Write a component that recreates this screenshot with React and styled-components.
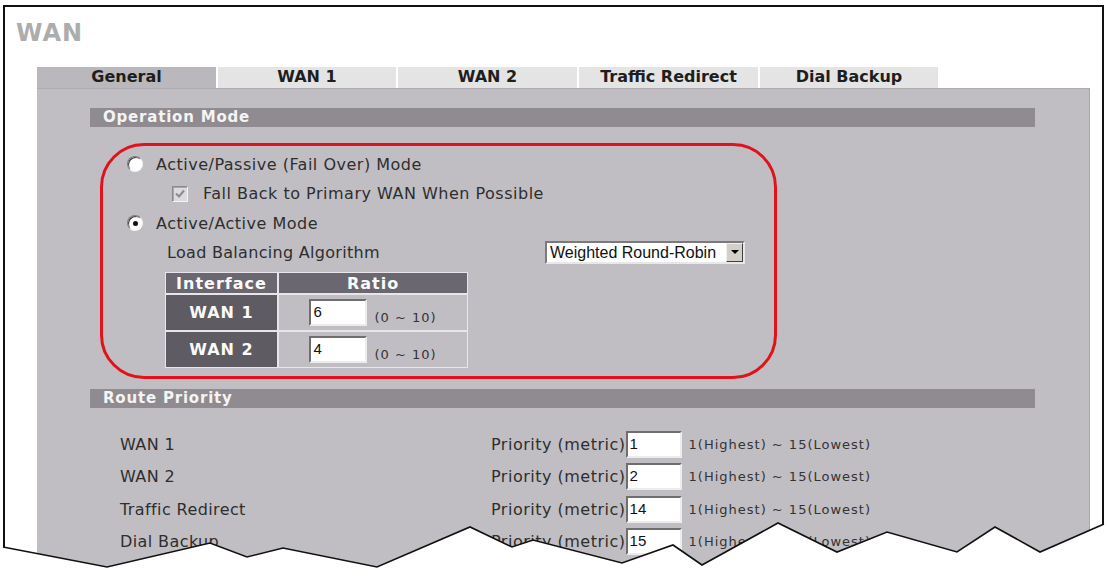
import React from 'react';
import styled, { createGlobalStyle } from 'styled-components';

const GlobalStyle = createGlobalStyle`
  html, body { margin: 0; padding: 0; background: #fff; }
  body { font-family: "DejaVu Sans", Verdana, sans-serif; color: #2e2e2e; }
`;

const Page = styled.div`
  position: relative;
  width: 1109px;
  height: 576px;
  overflow: hidden;
  background: #fff;
`;

const Frame = styled.div`
  box-sizing: border-box;
  margin: 5px 0 0 3px;
  width: 1101px;
  height: 620px;
  border: 2px solid #111;
  border-bottom: none;
`;

const Title = styled.h1`
  margin: 0;
  padding: 12px 0 0 11px;
  height: 48px;
  box-sizing: border-box;
  font-size: 24px;
  line-height: 28px;
  font-weight: bold;
  color: #adadad;
  letter-spacing: 1px;
`;

const TabBar = styled.div`
  display: flex;
  margin: 12px 0 0 32px;
  height: 21px;
`;

const Tab = styled.div`
  width: ${p => p.w}px;
  box-sizing: border-box;
  border-right: 2px solid #fff;
  background: ${p => (p.active ? '#bbb8bd' : '#e4e4e4')};
  font-weight: bold;
  font-size: 16px;
  line-height: 20px;
  text-align: center;
  color: #1e1e1e;
`;

const Panel = styled.div`
  box-sizing: border-box;
  margin-left: 32px;
  width: 1053px;
  height: 520px;
  background: #c1bec3;
  border-top: 1px solid #aeabb0;
  border-right: 1px solid #aaa8ac;
  padding-top: 19px;
`;

const SectionBar = styled.div`
  margin-left: 53px;
  width: 945px;
  height: 19px;
  background: #8f8b91;
  color: #f4f4f4;
  font-weight: bold;
  font-size: 15px;
  line-height: 19px;
  letter-spacing: 0.8px;
  padding-left: 13px;
  box-sizing: border-box;
  margin-top: ${p => p.mt || 0}px;
`;

const Callout = styled.div`
  box-sizing: border-box;
  margin: 16px 0 0 63px;
  width: 677px;
  height: 236px;
  border: 3px solid #e0121b;
  border-radius: 44px;
  padding: 3px 0 0 24px;
`;

const OptionRow = styled.div`
  display: flex;
  align-items: center;
  height: ${p => p.h || 30}px;
  padding-left: ${p => p.indent || 0}px;
  font-size: 16px;
  letter-spacing: 0.5px;
  white-space: nowrap;
`;

const Radio = styled.span`
  position: relative;
  width: 14px;
  height: 14px;
  flex: none;
  border-radius: 50%;
  background: #fff;
  border: 1px solid;
  border-color: #7c7c7c #f2f2f2 #f2f2f2 #7c7c7c;
  box-shadow: inset 1px 1px 0 #3c3c3c;
  margin-right: 13px;
  &::after {
    content: '';
    display: ${p => (p.checked ? 'block' : 'none')};
    position: absolute;
    left: 5px;
    top: 5px;
    width: 5px;
    height: 5px;
    border-radius: 50%;
    background: #111;
  }
`;

const CheckBox = styled.span`
  width: 14px;
  height: 14px;
  flex: none;
  background: #dcdadd;
  border: 1px solid;
  border-color: #8a8a8a #f4f4f4 #f4f4f4 #8a8a8a;
  box-shadow: inset 1px 1px 0 #a8a8a8;
  margin-right: 15px;
  display: flex;
  align-items: center;
  justify-content: center;
`;

const Spacer = styled.div`
  width: ${p => p.w}px;
  flex: none;
  letter-spacing: 0.3px;
`;

const Select = styled.div`
  display: flex;
  width: 200px;
  height: 23px;
  box-sizing: border-box;
  background: #fff;
  border: 2px solid;
  border-color: #7a7a7a #e8e8e8 #e8e8e8 #7a7a7a;
  font-family: "Liberation Sans", Arial, sans-serif;
  font-size: 16px;
  letter-spacing: 0;
  color: #111;
`;

const SelectText = styled.span`
  flex: 1;
  line-height: 19px;
  padding-left: 3px;
`;

const SelectArrow = styled.span`
  width: 17px;
  background: #d4d0c8;
  border: 1px solid;
  border-color: #f0f0f0 #404040 #404040 #f0f0f0;
  box-sizing: border-box;
  display: flex;
  align-items: center;
  justify-content: center;
  &::after {
    content: '';
    border-left: 4px solid transparent;
    border-right: 4px solid transparent;
    border-top: 4px solid #000;
  }
`;

const RatioTable = styled.div`
  display: grid;
  grid-template-columns: 111px 188px;
  grid-template-rows: 20px 35px 35px;
  gap: 2px;
  margin: 6px 0 0 38px;
  width: 303px;
  box-sizing: border-box;
  padding: 1px;
  background: #e8e6ea;
`;

const HeadCell = styled.div`
  background: ${p => (p.dark ? '#5f5b63' : '#6b6770')};
  color: #fafafa;
  font-weight: bold;
  font-size: 16px;
  letter-spacing: 1px;
  display: flex;
  align-items: center;
  justify-content: center;
`;

const RatioCell = styled.div`
  background: #c1bec3;
  display: flex;
  align-items: flex-end;
  justify-content: center;
  padding-bottom: 4px;
  box-sizing: border-box;
`;

const TextInput = styled.div`
  width: ${p => p.w}px;
  height: ${p => p.h}px;
  box-sizing: border-box;
  background: #fff;
  border: 2px solid;
  border-color: #6e6e6e #ececec #ececec #6e6e6e;
  font-family: "Liberation Sans", Arial, sans-serif;
  font-size: 15px;
  letter-spacing: 0;
  line-height: ${p => p.h - 6}px;
  padding-left: 2px;
  color: #111;
  flex: none;
`;

const Hint = styled.span`
  font-size: 13px;
  letter-spacing: 1px;
  color: #333;
  margin-left: 7px;
  margin-bottom: ${p => p.mb || 0}px;
  white-space: nowrap;
`;

const RouteList = styled.div`
  margin: 20px 0 0 83px;
`;

const RouteRow = styled.div`
  display: flex;
  align-items: center;
  height: 32.5px;
  font-size: 16px;
  white-space: nowrap;
`;

const RouteLabel = styled.span`
  width: 371px;
  flex: none;
  letter-spacing: 0.4px;
`;

const Metric = styled.span`
  letter-spacing: 0.5px;
`;

const TornEdge = styled.svg`
  position: absolute;
  left: 0;
  top: 0;
  pointer-events: none;
`;

const tabs = [
  { label: 'General', w: 181, active: true },
  { label: 'WAN 1', w: 180 },
  { label: 'WAN 2', w: 181 },
  { label: 'Traffic Redirect', w: 181 },
  { label: 'Dial Backup', w: 180 },
];

const routes = [
  { name: 'WAN 1', value: '1' },
  { name: 'WAN 2', value: '2' },
  { name: 'Traffic Redirect', value: '14' },
  { name: 'Dial Backup', value: '15' },
];

const tear = [
  [3, 547], [107, 567], [210, 543], [247, 557], [283, 548], [377, 567],
  [470, 527], [512, 547], [533, 540], [622, 563], [673, 545], [702, 565],
  [778, 523], [837, 552], [887, 532], [957, 552], [995, 527], [1040, 552], [1104, 524],
];

const tearLine = tear.map(p => p.join(',')).join(' ');
const tearFill = `0,547 ${tearLine} 1109,522 1109,576 0,576`;

const App = () => {
  return (
    <Page>
      <GlobalStyle />
      <Frame>
        <Title>WAN</Title>
        <TabBar>
          {tabs.map(t => (
            <Tab key={t.label} w={t.w} active={t.active}>{t.label}</Tab>
          ))}
        </TabBar>
        <Panel>
          <SectionBar>Operation Mode</SectionBar>
          <Callout>
            <OptionRow h={30}>
              <Radio />
              Active/Passive (Fail Over) Mode
            </OptionRow>
            <OptionRow h={29} indent={45}>
              <CheckBox>
                <svg width="10" height="10" viewBox="0 0 10 10">
                  <polyline points="1,4.5 4,7.5 9,1.5" fill="none" stroke="#8c8c8c" strokeWidth="2" />
                </svg>
              </CheckBox>
              Fall Back to Primary WAN When Possible
            </OptionRow>
            <OptionRow h={30}>
              <Radio checked />
              Active/Active Mode
            </OptionRow>
            <OptionRow h={28} indent={40}>
              <Spacer w={378}>Load Balancing Algorithm</Spacer>
              <Select>
                <SelectText>Weighted Round-Robin</SelectText>
                <SelectArrow />
              </Select>
            </OptionRow>
            <RatioTable>
              <HeadCell>Interface</HeadCell>
              <HeadCell>Ratio</HeadCell>
              <HeadCell dark>WAN 1</HeadCell>
              <RatioCell>
                <TextInput w={58} h={27}>6</TextInput>
                <Hint mb={1}>(0 ~ 10)</Hint>
              </RatioCell>
              <HeadCell dark>WAN 2</HeadCell>
              <RatioCell>
                <TextInput w={58} h={27}>4</TextInput>
                <Hint mb={1}>(0 ~ 10)</Hint>
              </RatioCell>
            </RatioTable>
          </Callout>
          <SectionBar mt={10}>Route Priority</SectionBar>
          <RouteList>
            {routes.map(r => (
              <RouteRow key={r.name}>
                <RouteLabel>{r.name}</RouteLabel>
                <Metric>Priority (metric)</Metric>
                <TextInput w={56} h={27}>{r.value}</TextInput>
                <Hint>1(Highest) ~ 15(Lowest)</Hint>
              </RouteRow>
            ))}
          </RouteList>
        </Panel>
      </Frame>
      <TornEdge width="1109" height="576" viewBox="0 0 1109 576">
        <polygon points={tearFill} fill="#fff" />
        <polyline points={tearLine} fill="none" stroke="#111" strokeWidth="1.6" />
      </TornEdge>
    </Page>
  );
};

export default App;
